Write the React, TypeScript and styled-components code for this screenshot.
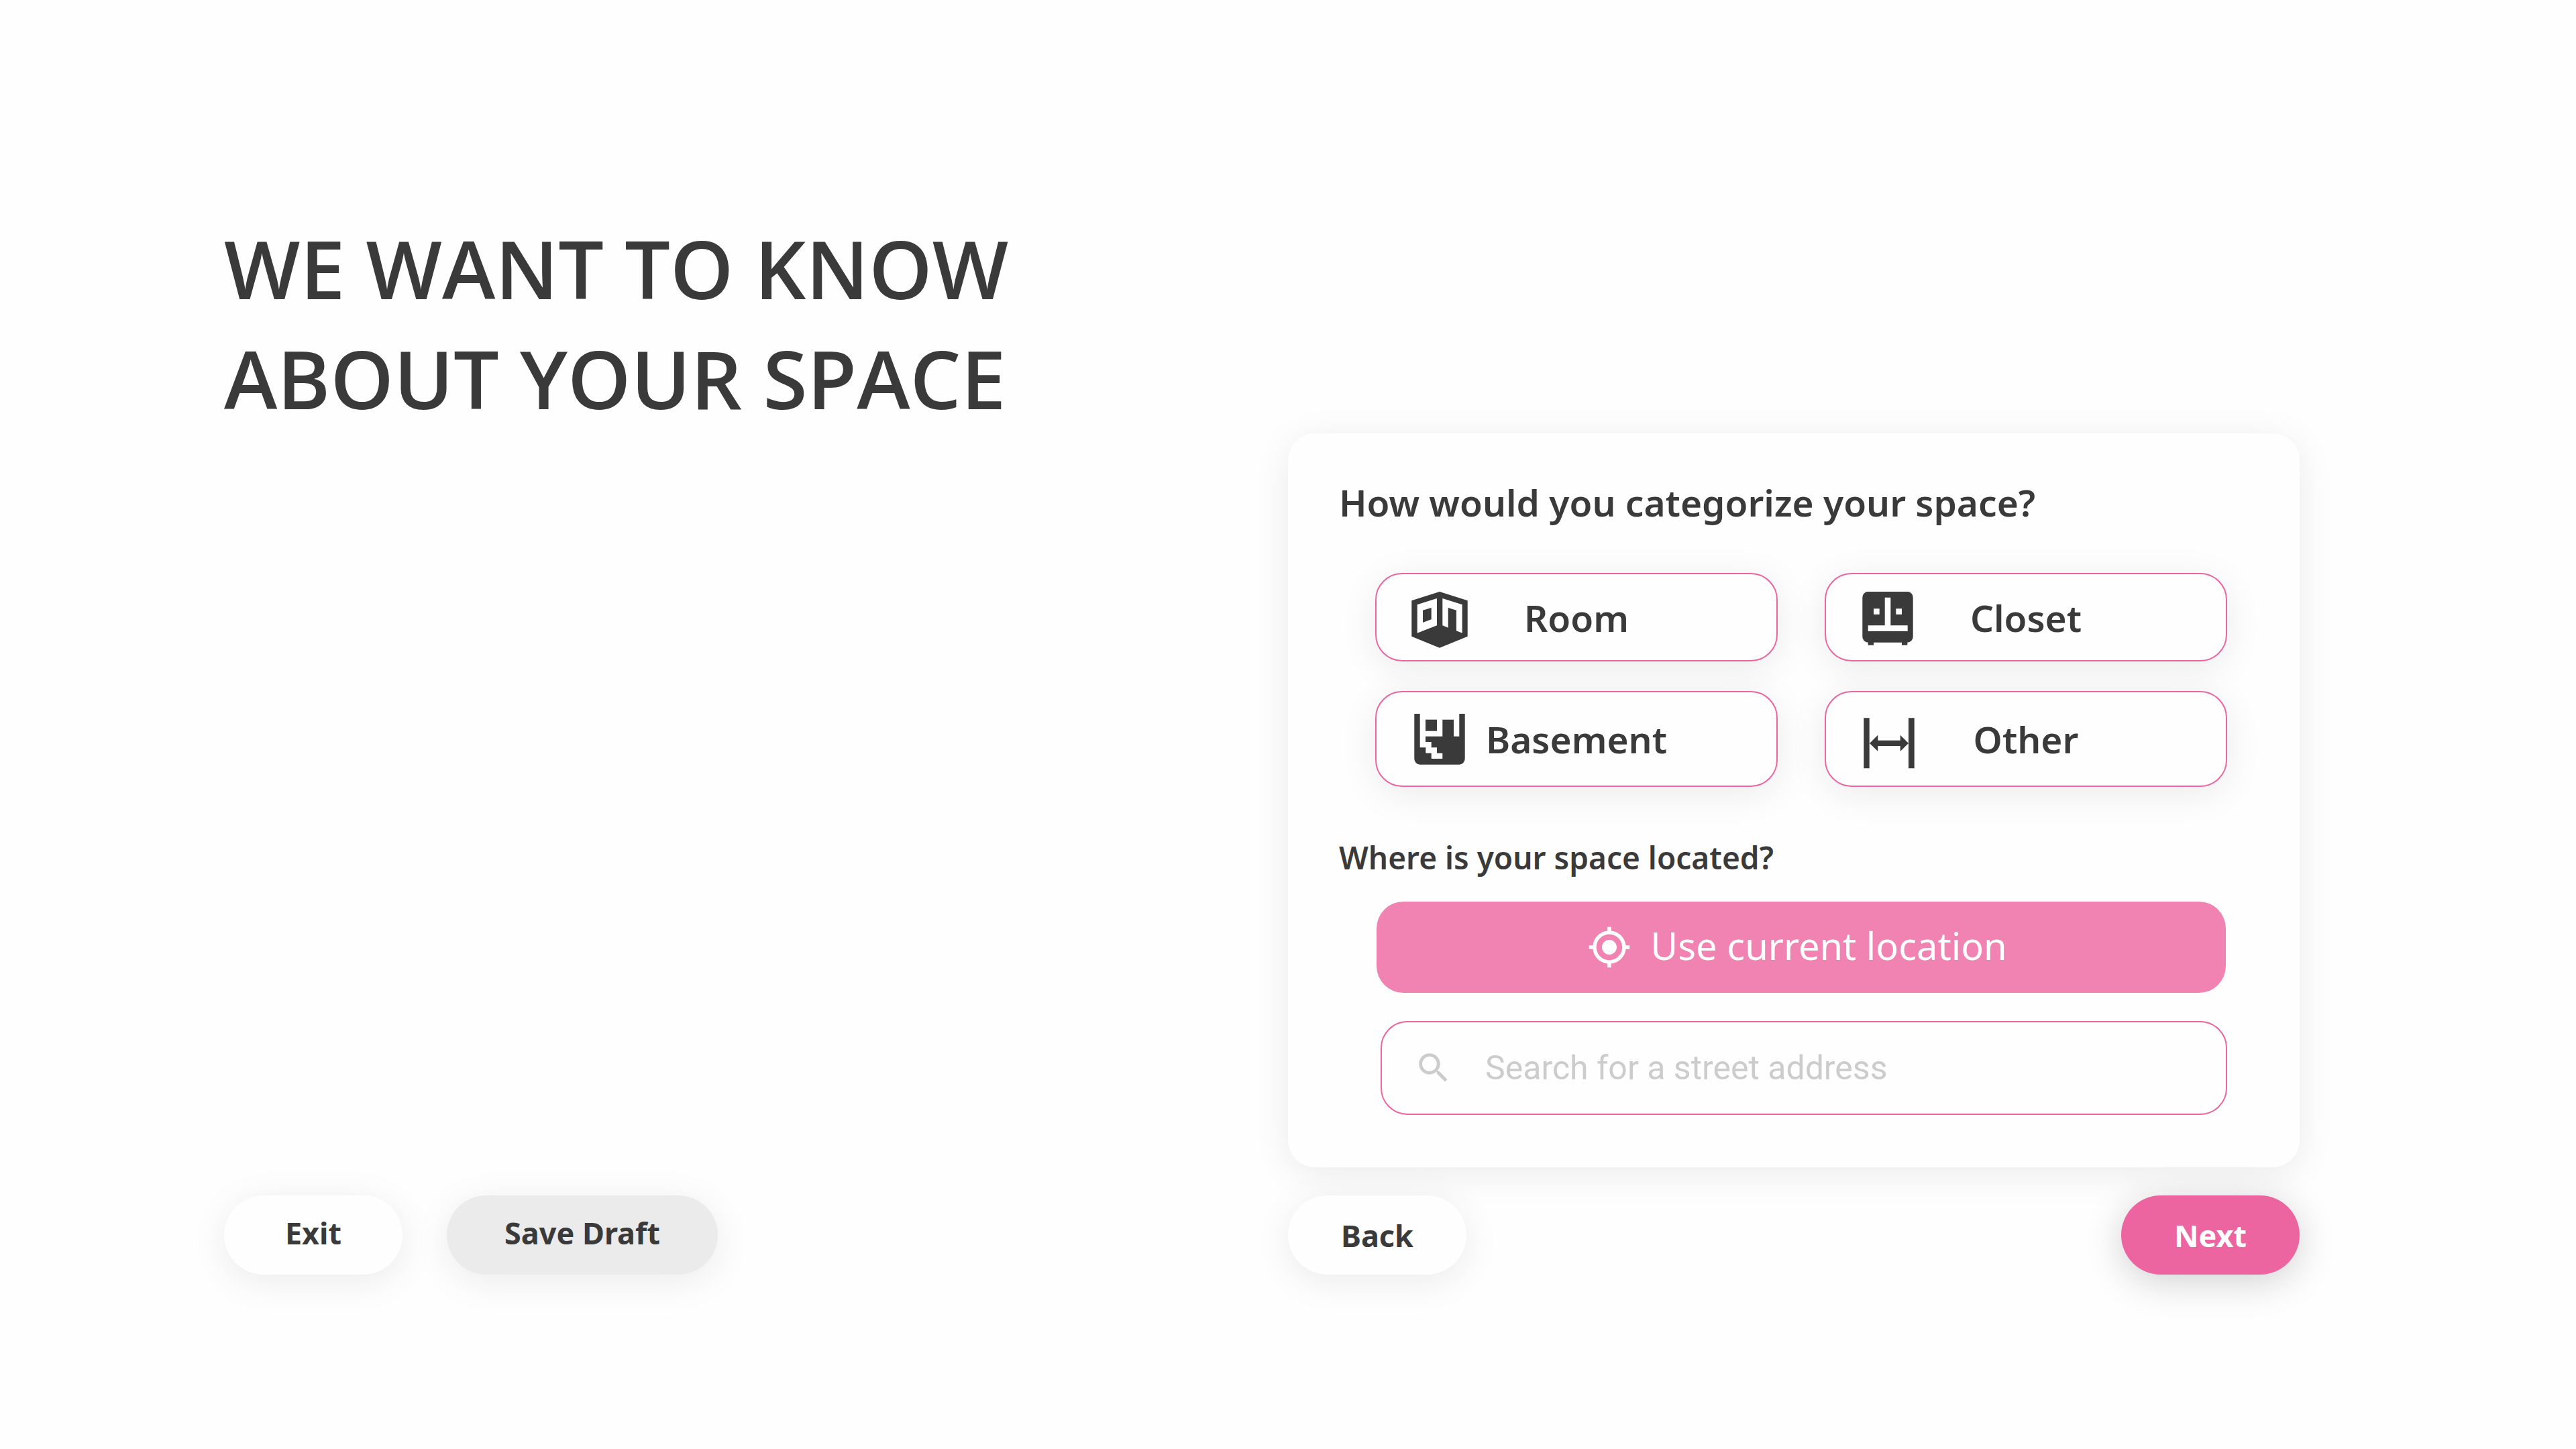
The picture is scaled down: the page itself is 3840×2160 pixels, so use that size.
import React from "react";
import styled, { createGlobalStyle, css } from "styled-components";
import { MdMyLocation, MdSearch } from "react-icons/md";

const ink = "#3a3a3a";
const pink = "#ec65a0";
const paper = "#fefefe";
const softShadow = "0 10px 56px rgba(0, 0, 0, 0.08)";
const strongShadow = "0 10px 56px rgba(0, 0, 0, 0.18)";

const GlobalStyle = createGlobalStyle`
  *, *::before, *::after { box-sizing: border-box; }
  body {
    margin: 0;
    background: ${paper};
    color: ${ink};
    font-family: "Noto Sans", "Open Sans", sans-serif;
  }
  button, input { font: inherit; color: inherit; }
  button { cursor: pointer; }
  h1, h2 { margin: 0; }
`;

const Page = styled.main`
  display: grid;
  grid-template-columns: minmax(0, 1586fr) minmax(0, 1508fr);
  padding: 318px 412px 260px 334px;
`;

const Title = styled.h1`
  grid-column: 1;
  font-family: "Open Sans", "Noto Sans", sans-serif;
  font-size: 120px;
  font-weight: 600;
  line-height: 164px;
`;

const Card = styled.section`
  grid-column: 2;
  grid-row: 2;
  display: flex;
  flex-direction: column;
  padding: 63px 108px 78px 76px;
  border-radius: 40px;
  background: ${paper};
  box-shadow: ${softShadow};
`;

const Question = styled.h2<{ $minor?: boolean }>`
  font-weight: 600;
  font-size: ${(p) => (p.$minor ? 46 : 55)}px;
  line-height: ${(p) => (p.$minor ? 64 : 80)}px;
`;

const Options = styled.div`
  display: grid;
  grid-template-columns: 1fr 1fr;
  grid-template-rows: 132px 143px;
  gap: 44px 70px;
  margin: 65px 0 73px 54px;
`;

const Option = styled.button`
  display: grid;
  grid-template-columns: 1fr auto 1fr;
  align-items: center;
  padding: 0 44px;
  border: 2px solid ${pink};
  border-radius: 40px;
  background: ${paper};
  box-shadow: ${softShadow};
  font-size: 55px;
  font-weight: 600;
`;

const OptionIcon = styled.svg`
  display: block;
  width: 100px;
  height: 100px;
  fill: ${ink};
`;

const LocationFields = styled.div`
  display: flex;
  flex-direction: column;
  gap: 42px;
  margin: 34px 0 0 56px;
`;

const LocateButton = styled.button`
  display: flex;
  align-items: center;
  justify-content: center;
  gap: 28px;
  height: 136px;
  margin-right: 2px;
  padding: 0 12px 0 0;
  border: 0;
  border-radius: 40px;
  background: #f083b1;
  color: #fff;
  font-size: 56px;
`;

const LocateLabel = styled.span`
  padding-bottom: 6px;
`;

const SearchField = styled.label`
  display: flex;
  align-items: center;
  gap: 48px;
  height: 140px;
  margin-left: 6px;
  padding: 0 48px;
  border: 2px solid ${pink};
  border-radius: 40px;
  color: #ccc;
`;

const SearchInput = styled.input`
  flex: 1;
  min-width: 0;
  padding: 0;
  border: 0;
  outline: 0;
  background: transparent;
  color: ${ink};
  font-family: Roboto, sans-serif;
  font-size: 50px;
  &::placeholder {
    color: #ccc;
    opacity: 1;
  }
`;

const Actions = styled.div<{ $side: "left" | "right" }>`
  grid-row: 3;
  grid-column: ${(p) => (p.$side === "left" ? 1 : 2)};
  display: flex;
  gap: 66px;
  margin-top: 42px;
  ${(p) => p.$side === "right" && css`justify-content: space-between;`}
`;

const tones = {
  plain: css`background: ${paper}; box-shadow: ${softShadow};`,
  muted: css`background: #ebebeb; box-shadow: ${softShadow};`,
  primary: css`background: ${pink}; color: #fff; box-shadow: ${strongShadow};`,
};

const Pill = styled.button<{
  $tone: keyof typeof tones;
  $raised?: boolean;
  $wide?: boolean;
}>`
  min-width: ${(p) => (p.$wide ? 404 : 266)}px;
  height: 118px;
  padding: 0 40px ${(p) => (p.$raised ? 8 : 0)}px;
  border: 0;
  border-radius: 59px;
  font-size: 45px;
  font-weight: 700;
  white-space: nowrap;
  ${(p) => tones[p.$tone]}
`;

const RoomIcon = () => (
  <OptionIcon viewBox="0 0 100 100" aria-hidden="true">
    <path
      fillRule="evenodd"
      d="M50 12 91.7 25.3V78.7L50 95.7 8.3 78.7V25.3ZM16.7 31.3V73.7L46 62.3V22ZM54.3 22V62.3L62.7 65.7V36L75 39.7V70.3L83.7 73.7V31.3Z"
    />
    <path d="M25 39.7 37.7 36V53.3L25 58Z" />
  </OptionIcon>
);

const ClosetIcon = () => (
  <OptionIcon viewBox="0 0 100 100" aria-hidden="true">
    <path
      fillRule="evenodd"
      d="M18.7 12H77.3A8.4 8.4 0 0 1 85.7 20.4V79.3A8.4 8.4 0 0 1 77.3 87.7V91.7H69V87.7H27V91.7H18.7V87.7A8.4 8.4 0 0 1 10.3 79.3V20.4A8.4 8.4 0 0 1 18.7 12ZM43.7 20.7V62.3H18.7V71H77.7V62.3H52.3V20.7ZM27 37.3V46H35.7V37.3ZM60.3 37.3V46H69V37.3Z"
    />
  </OptionIcon>
);

const BasementIcon = () => (
  <OptionIcon viewBox="0 0 100 100" aria-hidden="true">
    <path d="M12.3 12H20.7V62.3H29.3V70.7H37.7V79H54.3V70.7H46V62.3H37.7V54H29V45.7H54.3V20.7H71V45.7H79.3V12H87.7V79.3A8.4 8.4 0 0 1 79.3 87.7H20.7A8.4 8.4 0 0 1 12.3 79.3Z" />
    <path d="M29 20.7H46V37.7H29Z" />
  </OptionIcon>
);

const OtherIcon = () => (
  <OptionIcon viewBox="0 0 100 100" aria-hidden="true">
    <path d="M12.3 18.3H20.7V93.3H12.3ZM79 18.3H87.7V93.3H79Z" />
    <path d="M21 56 33.3 43.7V51.7H66.7V43.7L79 56 66.7 68V60H33.3V68Z" />
  </OptionIcon>
);

const categories = [
  { name: "Room", Icon: RoomIcon },
  { name: "Closet", Icon: ClosetIcon },
  { name: "Basement", Icon: BasementIcon },
  { name: "Other", Icon: OtherIcon },
];

export default function App() {
  return (
    <>
      <GlobalStyle />
      <Page>
        <Title>
          WE WANT TO KNOW
          <br />
          ABOUT YOUR SPACE
        </Title>

        <Card>
          <Question>How would you categorize your space?</Question>
          <Options>
            {categories.map(({ name, Icon }) => (
              <Option key={name} type="button">
                <Icon />
                <span>{name}</span>
              </Option>
            ))}
          </Options>

          <Question $minor>Where is your space located?</Question>
          <LocationFields>
            <LocateButton type="button">
              <MdMyLocation size={66} aria-hidden="true" />
              <LocateLabel>Use current location</LocateLabel>
            </LocateButton>
            <SearchField htmlFor="address">
              <MdSearch size={58} aria-hidden="true" />
              <SearchInput
                id="address"
                type="text"
                aria-label="Street address"
                placeholder="Search for a street address"
              />
            </SearchField>
          </LocationFields>
        </Card>

        <Actions $side="left">
          <Pill type="button" $tone="plain" $raised>Exit</Pill>
          <Pill type="button" $tone="muted" $raised $wide>Save Draft</Pill>
        </Actions>
        <Actions $side="right">
          <Pill type="button" $tone="plain">Back</Pill>
          <Pill type="button" $tone="primary">Next</Pill>
        </Actions>
      </Page>
    </>
  );
}
